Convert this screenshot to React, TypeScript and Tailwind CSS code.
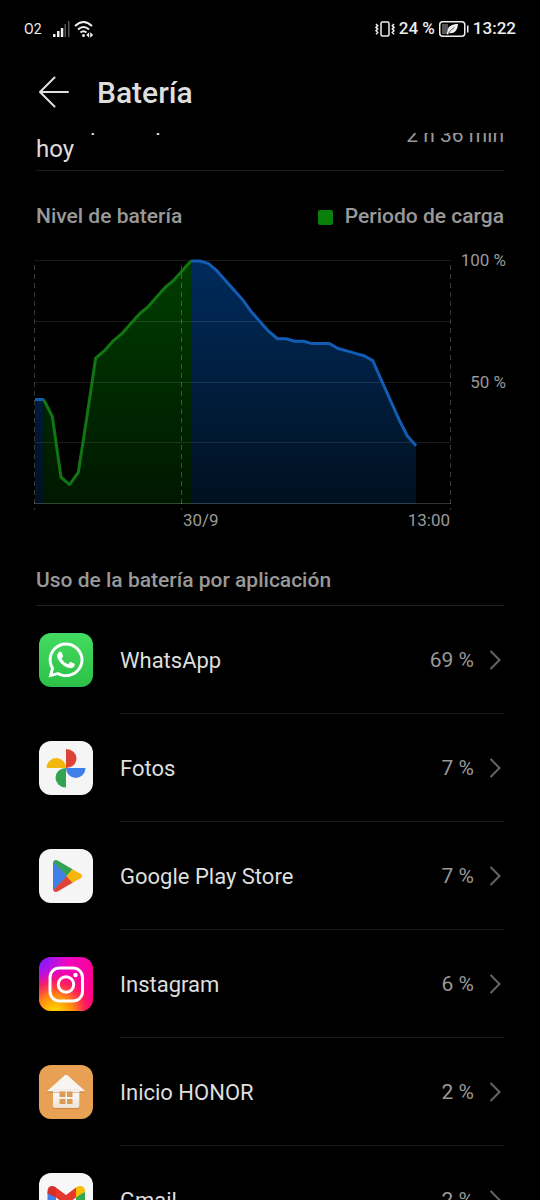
import { ReactNode } from "react";
import { FaWhatsapp } from "react-icons/fa";

const levels = [
  43, 43, 36, 11, 8, 13, 36, 60, 63, 67, 70, 74, 78, 81, 85, 89, 92, 96, 100,
  100, 99, 96, 92, 88, 84, 79, 75, 71, 68, 68, 67, 67, 66, 66, 66, 64, 63, 62,
  61, 59, 51, 43, 35, 28, 24,
];

const chartTop = 11;
const chartBottom = 254;
const chartRight = 417;
const step = 8.66;

// charging goes from the second reading until the battery is full
const segments = [
  { from: 0, to: 1, fill: "url(#blueFill)", stroke: "#125cb3" },
  { from: 18, to: 44, fill: "url(#blueFill)", stroke: "#125cb3" },
  { from: 1, to: 18, fill: "url(#greenFill)", stroke: "#117511" },
];

const pointX = (i: number) => 1 + i * step;
const pointY = (level: number) =>
  chartBottom - (level / 100) * (chartBottom - chartTop);

function linePath(from: number, to: number) {
  return levels
    .slice(from, to + 1)
    .map((level, i) => `${i ? "L" : "M"}${pointX(from + i)} ${pointY(level)}`)
    .join(" ");
}

function BatteryChart() {
  return (
    <svg
      className="block w-full"
      viewBox="0 0 418 260"
      role="img"
      aria-label="Nivel de batería"
    >
      <defs>
        <linearGradient
          id="blueFill"
          gradientUnits="userSpaceOnUse"
          x1="0"
          y1={chartTop}
          x2="0"
          y2={chartBottom}
        >
          <stop offset="0" stopColor="#002b5c" />
          <stop offset="1" stopColor="#001020" />
        </linearGradient>
        <linearGradient
          id="greenFill"
          gradientUnits="userSpaceOnUse"
          x1="0"
          y1={chartTop}
          x2="0"
          y2={chartBottom}
        >
          <stop offset="0" stopColor="#003d00" />
          <stop offset="1" stopColor="#001700" />
        </linearGradient>
      </defs>
      {segments.map(({ from, to, fill }) => (
        <path
          key={from}
          d={`${linePath(from, to)} V${chartBottom} H${pointX(from)} Z`}
          fill={fill}
        />
      ))}
      {[0, 25, 50, 75, 100].map((level) => (
        <path
          key={level}
          d={`M0 ${Math.round(pointY(level)) - 0.5} H${chartRight}`}
          stroke="#fff"
          strokeOpacity={level === 0 ? 0.2 : 0.1}
        />
      ))}
      {[0.5, 147.5, 416.5].map((x) => (
        <path
          key={x}
          d={`M${x} 15 V260`}
          stroke="#fff"
          strokeOpacity="0.22"
          strokeDasharray="5 4"
        />
      ))}
      {segments.map(({ from, to, stroke }) => (
        <path
          key={from}
          d={linePath(from, to)}
          fill="none"
          stroke={stroke}
          strokeWidth="3"
          strokeLinejoin="round"
        />
      ))}
    </svg>
  );
}

function PhotosIcon() {
  return (
    <svg className="size-full" viewBox="0 0 54 54" aria-hidden="true">
      <path d="M27 27V8a10.500 9.500 0 0 1 0 19Z" fill="#df4338" />
      <path d="M27 27h19.500a9.750 10 0 0 1-19.500 0Z" fill="#3f80e8" />
      <path d="M27 27v19.500a10.500 9.750 0 0 1 0-19.500Z" fill="#32a350" />
      <path d="M27 27H7.500a9.750 10 0 0 1 19.500 0Z" fill="#f2b90c" />
    </svg>
  );
}

function PlayIcon() {
  return (
    <svg className="size-full" viewBox="0 0 54 54" aria-hidden="true">
      <path d="M14.500 12.500 28.500 27 14.500 41.500Q14 41 14 40V14q0-1 .5-1.500Z" fill="#3f7fe6" />
      <path d="M14.300 12.800q1.300-2.600 4.300-1.200L34 20.500 28 27Z" fill="#34a152" />
      <path d="M14.300 41.200q1.300 2.600 4.300 1.200L34 33.500 28 27Z" fill="#e04335" />
      <path d="m33.300 20.200 8.300 4.600q3.200 2.200 0 4.400l-8.300 4.600L27.500 27Z" fill="#f7b70a" />
    </svg>
  );
}

function InstagramIcon() {
  return (
    <svg className="size-full" viewBox="0 0 54 54" aria-hidden="true">
      <defs>
        <linearGradient id="igBase" x1="0" y1="0" x2="1" y2="0.4">
          <stop offset="0" stopColor="#b114f5" />
          <stop offset="0.5" stopColor="#ee05bd" />
          <stop offset="1" stopColor="#ff0090" />
        </linearGradient>
        <radialGradient id="igWarm" cx="0.3" cy="1.05" r="0.85">
          <stop offset="0.1" stopColor="#ffd000" />
          <stop offset="0.4" stopColor="#ff8a10" />
          <stop offset="0.7" stopColor="#ff2050" stopOpacity="0.8" />
          <stop offset="1" stopColor="#ff0090" stopOpacity="0" />
        </radialGradient>
        <radialGradient id="igCool" cx="0" cy="0" r="0.5">
          <stop offset="0" stopColor="#6a20ff" />
          <stop offset="1" stopColor="#b010f0" stopOpacity="0" />
        </radialGradient>
      </defs>
      <path d="M0 0h54v54H0Z" fill="url(#igBase)" />
      <path d="M0 0h54v54H0Z" fill="url(#igWarm)" />
      <path d="M0 0h54v54H0Z" fill="url(#igCool)" />
      <g fill="none" stroke="#fff" strokeWidth="3">
        <rect x="11" y="11" width="32.500" height="33" rx="9.500" />
        <circle cx="27" cy="27.500" r="7.700" />
      </g>
      <circle cx="36.500" cy="18" r="2.200" fill="#fff" />
    </svg>
  );
}

function HomeIcon() {
  return (
    <svg className="size-full" viewBox="0 0 54 54" aria-hidden="true">
      <defs>
        <linearGradient id="houseFill" x1="0" y1="0" x2="0" y2="1">
          <stop offset="0" stopColor="#fff" />
          <stop offset="1" stopColor="#ece2d6" />
        </linearGradient>
      </defs>
      <path d="M14 27h27v15q0 2-2 2H16q-2 0-2-2Z" fill="#b8752f" opacity="0.6" />
      <path d="M14 24h26.500v17q0 2-2 2H16q-2 0-2-2Z" fill="url(#houseFill)" />
      <path d="M8 27.500 27 11l19.500 16.500Z" fill="#c88946" />
      <path d="m8 26.300 17.500-15.800q1.600-1.400 3.200 0L46.300 26.300Z" fill="#f8f5f0" />
      <path d="M14 24h26.500v3H14Z" fill="#f2ede6" />
      <path d="M20.500 26.500h6V32h-6Zm7.500 0h5.500V32H28Zm-7.500 7.500h6v5h-6Zm7.500 0h5.500v5H28Z" fill="#dc9a54" />
    </svg>
  );
}

function GmailIcon() {
  return (
    <svg className="size-full" viewBox="0 0 54 54" aria-hidden="true">
      <path d="M8.500 19v19q0 3 3 3H17V22Z" fill="#4385f0" />
      <path d="M37 22v19h6q3 0 3-3V19Z" fill="#34a853" />
      <path d="M17 24.500V14.500L27 22l10-7.500v10L27 32Z" fill="#e5392f" />
      <path d="M8.500 18c0-5 5-6.500 8.500-3.500v10l-8.500-4Z" fill="#d5302a" />
      <path d="M46 18c0-5-5.500-6.500-9-3.500v10l9-6Z" fill="#fbbc04" />
    </svg>
  );
}

type AppUsage = {
  name: string;
  percent: number;
  tile: string;
  icon: ReactNode;
};

const apps: AppUsage[] = [
  {
    name: "WhatsApp",
    percent: 69,
    tile: "bg-linear-to-b from-[#43dc60] to-[#2cc046] text-white",
    icon: <FaWhatsapp className="size-10" />,
  },
  { name: "Fotos", percent: 7, tile: "bg-[#f5f5f5]", icon: <PhotosIcon /> },
  {
    name: "Google Play Store",
    percent: 7,
    tile: "bg-[#f5f5f5]",
    icon: <PlayIcon />,
  },
  { name: "Instagram", percent: 6, tile: "bg-black", icon: <InstagramIcon /> },
  {
    name: "Inicio HONOR",
    percent: 2,
    tile: "bg-[#e8a055]",
    icon: <HomeIcon />,
  },
  { name: "Gmail", percent: 2, tile: "bg-[#f7f7f7]", icon: <GmailIcon /> },
];

function AppRow({ name, percent, tile, icon }: AppUsage) {
  return (
    <li>
      <a href="#" className="flex items-stretch">
        <span className="flex items-center w-[84px] pl-[3px] shrink-0">
          <span
            className={`flex items-center justify-center size-[54px] rounded-xl overflow-hidden ${tile}`}
          >
            {icon}
          </span>
        </span>
        <span className="flex items-center flex-1 h-[108px] border-b border-[#181818]">
          <span className="flex-1 pt-0.5 text-[22px] text-[#dedede]">
            {name}
          </span>
          <span className="pt-0.5 text-[21px] text-[#999]">{percent} %</span>
          <svg
            className="w-3 h-5 ml-[15px] mr-[3px]"
            viewBox="0 0 12 20"
            fill="none"
            stroke="#666"
            strokeWidth="2"
            aria-hidden="true"
          >
            <path d="m1.500 1 9 9-9 9" />
          </svg>
        </span>
      </a>
    </li>
  );
}

function StatusBar() {
  return (
    <div className="flex items-center justify-between h-[58px] px-6 text-[17px] font-medium text-[#eee]">
      <div className="flex items-center">
        <span className="text-sm font-normal">O2</span>
        <svg className="w-[17px] h-4 ml-[11px]" viewBox="0 0 17 16" aria-hidden="true">
          <path d="M0 13h2.500v3H0Zm4-3h2.500v6H4Zm3.800-3h2.500v9H7.800Z" fill="#eee" />
          <path d="M11.500 3H13v13h-1.500Zm3.500-3h1.500v16H15Z" fill="#555" />
        </svg>
        <svg
          className="w-5 h-[18px] ml-1"
          viewBox="0 0 20 18"
          fill="none"
          stroke="#eee"
          strokeWidth="2"
          aria-hidden="true"
        >
          <path d="M1 6q8.500-8 17 0M4 9.500q5.500-5 11 0M6.500 12.500q3-2.500 6 0" />
          <circle cx="9.500" cy="15.500" r="1.500" fill="#eee" stroke="none" />
          <path d="m15.200 12.300-3 2.700 3 2.700Zm1 0 3 2.700-3 2.700Z" fill="#eee" stroke="none" />
        </svg>
      </div>
      <div className="flex items-center">
        <svg
          className="w-5 h-4 mr-1"
          viewBox="0 0 20 16"
          fill="none"
          stroke="#eee"
          strokeWidth="1.500"
          aria-hidden="true"
        >
          <rect x="6" y="1" width="8" height="14" rx="1.500" />
          <path d="m1 3 1.700 1.700L1 6.400l1.700 1.700L1 9.800l1.700 1.700L1 13.200M19 3l-1.700 1.700L19 6.400l-1.700 1.700L19 9.800l-1.700 1.700 1.700 1.700" />
        </svg>
        <span>24 %</span>
        <svg className="w-[30px] h-4 ml-1 mr-1" viewBox="0 0 30 16" aria-hidden="true">
          <rect x="0.750" y="0.750" width="25" height="14.500" rx="3" fill="none" stroke="#eee" strokeWidth="1.500" />
          <path d="M3 3h6v10H3Z" fill="#555" />
          <path d="M28 4.500h1.500v7H28Z" fill="#eee" />
          <path d="M19 3c-6 0-10 2-10.500 7L7.500 13l1.500.5 1-1.500c6 1 8.500-3 9-9Z" fill="#eee" />
          <path d="m9.500 12 3-3.500 3-2" fill="none" stroke="#333" strokeWidth="0.800" />
        </svg>
        <span>13:22</span>
      </div>
    </div>
  );
}

export default function App() {
  return (
    <div className="flex flex-col h-screen overflow-hidden bg-black font-['Roboto',sans-serif] text-[#dedede]">
      <StatusBar />
      <header className="flex items-center h-[75px] px-9 pb-[7px] shrink-0">
        <button type="button" aria-label="Atrás" className="pl-[3px]">
          <svg
            className="w-[30px] h-8"
            viewBox="0 0 30 32"
            fill="none"
            stroke="#dedede"
            strokeWidth="2"
            strokeLinecap="round"
            strokeLinejoin="round"
            aria-hidden="true"
          >
            <path d="M15.500 1.500 1 16l14.500 14.500M1 16h28" />
          </svg>
        </button>
        <h1 className="pt-0.5 ml-7 text-3xl font-medium">Batería</h1>
      </header>

      <main className="flex-1 min-h-0 px-9 overflow-hidden">
        <div className="flex items-center justify-between h-[72px] pt-0.5 -mt-[34px] border-b border-[#1c1c1c]">
          <p className="text-2xl leading-[27px]">
            Tiempo de pantalla
            <br />
            hoy
          </p>
          <span className="text-[21px] text-[#999]">2 h 36 min</span>
        </div>

        <section className="pt-8">
          <div className="flex items-center justify-between h-7 text-[21px] font-medium text-[#999]">
            <h2>Nivel de batería</h2>
            <div className="flex items-center">
              <span className="mr-3 bg-[#098009] rounded-xs size-[15px]" />
              Periodo de carga
            </div>
          </div>
          <div className="flex mt-[19px] -mx-0.5 text-[17px] leading-5 text-[#999]">
            <div className="flex-1">
              <BatteryChart />
              <div className="flex justify-between pl-[149px] pr-0.5">
                <span>30/9</span>
                <span>13:00</span>
              </div>
            </div>
            <div className="flex flex-col w-[54px] gap-[102px] text-right">
              <span>100 %</span>
              <span>50 %</span>
            </div>
          </div>
        </section>

        <section className="pt-9">
          <h2 className="pb-[11px] text-[21px] font-medium leading-7 text-[#999] border-b border-[#222]">
            Uso de la batería por aplicación
          </h2>
          <ul>
            {apps.map((app) => (
              <AppRow key={app.name} {...app} />
            ))}
          </ul>
        </section>
      </main>
    </div>
  );
}
